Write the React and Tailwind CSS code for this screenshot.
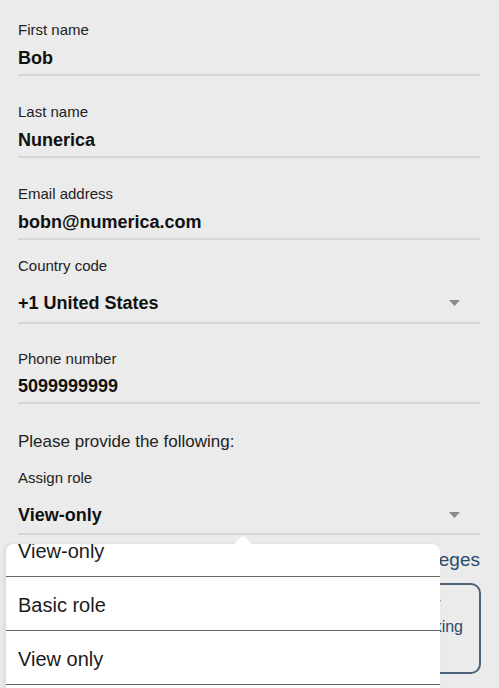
import React from "react";

const font = { fontFamily: '"Liberation Sans", Arial, Helvetica, sans-serif' };

function Caret() {
  return (
    <svg width="11" height="6" viewBox="0 0 11 6" className="shrink-0">
      <path d="M0 0 H11 L5.5 6 Z" fill="#8a8a8a" />
    </svg>
  );
}

function Field({ label, value, className = "", valueGap = "mt-[8px]", pb = "pb-[5px]", select = false }) {
  return (
    <div className={className}>
      <div className="text-[15px] leading-[18px] text-[#222]">{label}</div>
      <div className={`${valueGap} ${pb} border-b-2 border-[#d6d6d6] flex items-center justify-between`}>
        <span className="text-[18px] leading-[22px] font-bold text-[#111]">{value}</span>
        {select && (
          <span className="pr-[20px] flex items-center">
            <Caret />
          </span>
        )}
      </div>
    </div>
  );
}

export default function App() {
  const options = ["View-only", "Basic role", "View only"];
  return (
    <div style={font} className="relative w-[499px] h-[688px] overflow-hidden bg-[#ebebeb]">
      <div className="pt-[21px] pl-[18px] pr-[19px]">
        <Field label="First name" value="Bob" />
        <Field label="Last name" value="Nunerica" className="mt-[27px]" />
        <Field label="Email address" value="bobn@numerica.com" className="mt-[27px]" />
        <Field
          label="Country code"
          value="+1 United States"
          className="mt-[17px]"
          valueGap="mt-[17px]"
          pb="pb-[8px]"
          select
        />
        <Field label="Phone number" value="5099999999" className="mt-[26px]" valueGap="mt-[7px]" />
        <div className="mt-[28px] text-[17px] leading-[20px] text-[#222]">Please provide the following:</div>
        <Field
          label="Assign role"
          value="View-only"
          className="mt-[17px]"
          valueGap="mt-[17px]"
          pb="pb-[7px]"
          select
        />
        <div className="mt-[14px] text-right text-[19px] leading-[22px] text-[#2d4b6b]">
          View role privileges
        </div>
        <div className="mt-[12px] mr-[-1px] h-[91px] rounded-[10px] border-2 border-[#4d6279] pt-[1px] text-[16px] leading-[27px] text-[#2d4b6b]">
          <div className="text-right pr-[38px]">Learn more about role-</div>
          <div className="text-right pr-[16px]">based permissions and tracking</div>
        </div>
      </div>

      {/* Picker popover */}
      <div className="absolute left-[6px] top-[544px] w-[434px] h-[160px]">
        <svg
          width="22"
          height="10"
          viewBox="0 0 22 10"
          className="absolute left-[226px] top-[-8px]"
        >
          <path d="M0 10 L9 1.5 Q11 -0.3 13 1.5 L22 10 Z" fill="#ffffff" />
        </svg>
        <div className="h-full overflow-hidden rounded-t-[8px] bg-white shadow-[-2px_0_4px_rgba(0,0,0,0.08)]">
          <div className="mt-[-21px]">
            {options.map((o) => (
              <div key={o}>
                <div className="h-[53px] pt-[16px] pl-[12px] text-[20px] leading-[24px] text-[#1c1c1c]">{o}</div>
                <div className="h-px bg-[#676767]" />
              </div>
            ))}
          </div>
        </div>
      </div>
    </div>
  );
}
